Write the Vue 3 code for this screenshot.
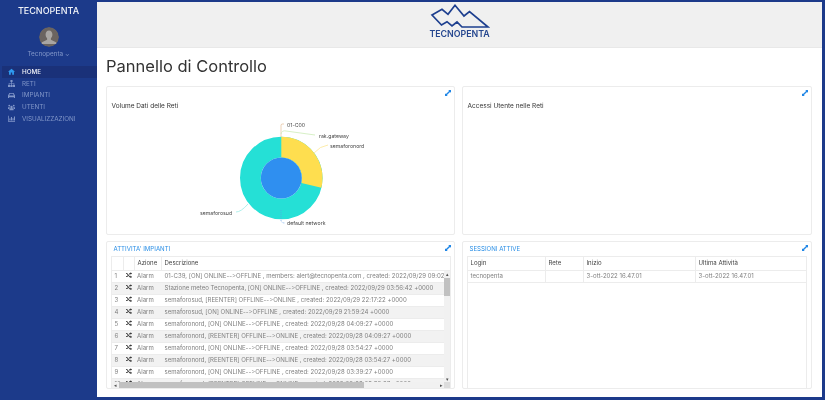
<template>
  <div class="page">
    <aside class="sidebar">
      <div class="brand">TECNOPENTA</div>
      <div class="avatar">
        <svg viewBox="0 0 20 20" width="20" height="20">
          <circle cx="10" cy="10" r="10" fill="#6b6460" />
          <path d="M10 3.500c2.200 0 3.400 1.700 3.400 4 0 1.700-.7 3-1.500 3.800v1.500l4.600 2.200c.8.4 1 1 1 2H2.500c0-1 .2-1.600 1-2l4.600-2.200v-1.500C7.300 10.500 6.600 9.200 6.600 7.500c0-2.300 1.200-4 3.400-4z" fill="#a9a6a3" />
        </svg>
      </div>
      <div class="user">Tecnopenta <span class="caret">⌄</span></div>
      <nav class="menu">
        <a v-for="item in menu" :key="item.label" class="menu-item" :class="{ active: item.active }">
          <svg viewBox="0 0 10 10" width="7" height="7"><path :d="item.icon" fill="currentColor" /></svg>
          <span>{{ item.label }}</span>
        </a>
      </nav>
    </aside>

    <main class="main">
      <header class="topbar">
        <svg class="logo" viewBox="0 0 60 26" width="60" height="26">
          <path d="M2 11 12 5.300 18 10.300 25 1.300 34 12 39.500 7.700 58 23H32L27 18 22 22 17 17.700 11.500 21z" fill="none" stroke="#1d3f8f" stroke-width="1.700" />
        </svg>
        <div class="logo-text">TECNOPENTA</div>
      </header>

      <div class="content">
        <h1>Pannello di Controllo</h1>
        <div class="cards">
          <section class="card">
            <svg class="expand" viewBox="0 0 8 8" width="6" height="6"><path :d="expandIcon" fill="#1f86e6" /></svg>
            <div class="chart-title">Volume Dati delle Reti</div>
            <svg class="chart" viewBox="0 0 339 118" width="339" height="118">
              <path d="M174 25V13Q174 11.500 177 12" fill="none" stroke="#e9c7a5" stroke-width=".8" />
              <path d="M174 22Q175 18 179 19L208 23" fill="none" stroke="#cdecb8" stroke-width=".8" />
              <path d="M207 41Q213 34 221 33" fill="none" stroke="#fde795" stroke-width=".8" />
              <path d="M129 100Q134 100 141 92" fill="none" stroke="#9cecE6" stroke-width=".8" />
              <circle cx="174.300" cy="66" r="30.900" fill="none" stroke="#25e0d6" stroke-width="20.800" />
              <path d="M174.300 24.700A41.300 41.300 0 0 1 214.400 75.700L194.400 71A20.500 20.500 0 0 0 174.300 45.500z" fill="#fede4f" />
              <circle cx="174.300" cy="66" r="20.500" fill="#2f8ff0" />
              <path d="M174 98V108Q174 111 178 111" fill="none" stroke="#5a9ee8" stroke-width=".7" stroke-dasharray="1 1" />
              <text x="180" y="15" class="chart-label">01-C00</text>
              <text x="212" y="26" class="chart-label">rak.gateway</text>
              <text x="223" y="36" class="chart-label">semaforonord</text>
              <text x="93" y="103" class="chart-label">semaforosud</text>
              <text x="180" y="113" class="chart-label">default network</text>
            </svg>
          </section>

          <section class="card">
            <svg class="expand" viewBox="0 0 8 8" width="6" height="6"><path :d="expandIcon" fill="#1f86e6" /></svg>
            <div class="chart-title">Accessi Utente nelle Reti</div>
          </section>

          <section class="card table-card">
            <svg class="expand" viewBox="0 0 8 8" width="6" height="6"><path :d="expandIcon" fill="#1f86e6" /></svg>
            <div class="card-title">ATTIVITA' IMPIANTI</div>
            <div class="grid activity">
              <div class="grid-head">
                <div class="c-num"></div>
                <div class="c-icon"></div>
                <div class="c-action">Azione</div>
                <div class="c-desc">Descrizione</div>
              </div>
              <div class="scroll-area">
                <div class="rows">
                  <div v-for="(row, i) in activity" :key="i" class="grid-row">
                    <div class="c-num">{{ i + 1 }}</div>
                    <div class="c-icon">
                      <svg viewBox="0 0 8 8" width="6" height="6"><path d="M0 1.500h1.700l3.500 4.500H6V4.800L8 6.500 6 8.200V7H4.700L1.200 2.500H0zM0 5.500h1.200l1-1.300.6.800-1.100 1.500H0zM4.700 1.500H6V.3L8 2 6 3.700V2.500h-.8l-.9 1.200-.6-.8z" fill="#1f1f1f" /></svg>
                    </div>
                    <div class="c-action">Alarm</div>
                    <div class="c-desc">{{ row }}</div>
                  </div>
                </div>
                <div class="vbar">
                  <span class="arrow">▴</span>
                  <div class="vtrack"><div class="vthumb"></div></div>
                  <span class="arrow">▾</span>
                </div>
              </div>
              <div class="hbar">
                <span class="arrow">◂</span>
                <div class="htrack"><div class="hthumb"></div></div>
                <span class="arrow">▸</span>
                <span class="corner"></span>
              </div>
            </div>
          </section>

          <section class="card table-card">
            <svg class="expand" viewBox="0 0 8 8" width="6" height="6"><path :d="expandIcon" fill="#1f86e6" /></svg>
            <div class="card-title">SESSIONI ATTIVE</div>
            <div class="grid sessions">
              <div class="grid-head">
                <div class="s-login">Login</div>
                <div class="s-net">Rete</div>
                <div class="s-time">Inizio</div>
                <div class="s-time">Ultima Attività</div>
              </div>
              <div class="grid-row">
                <div class="s-login">tecnopenta</div>
                <div class="s-net"></div>
                <div class="s-time">3-ott-2022 16.47.01</div>
                <div class="s-time">3-ott-2022 16.47.01</div>
              </div>
            </div>
          </section>
        </div>
      </div>
    </main>
  </div>
</template>

<script setup>
const expandIcon = 'M4.500 0H8V3.500L6.700 2.600 2.600 6.700 3.500 8H0V4.500L1.300 5.400 5.400 1.300z'

const menu = [
  { label: 'HOME', active: true, icon: 'M5 1 0 5.500h1.500V9.500h2.500V6.500h2V9.500h2.500V5.500H10z' },
  { label: 'RETI', icon: 'M3.500 0h3v3h-1v1.500H9V7h1v3H7V7h1V5.500H5.500V7h1v3h-3V7h1V5.500H2V7h1v3H0V7h1V4.500h3.500V3h-1z' },
  { label: 'IMPIANTI', icon: 'M2 1.500h6L10 5v3.500H8.500V7.500h-7V8.500H0V5zM2.800 2.500 1.700 5h6.600L7.200 2.500z' },
  { label: 'UTENTI', icon: 'M5 2.500a1.700 1.700 0 1 1 0 3.400 1.700 1.700 0 0 1 0-3.400zM1.800 1a1.300 1.300 0 1 1 0 2.600 1.300 1.300 0 0 1 0-2.600zM8.200 1a1.300 1.300 0 1 1 0 2.600 1.300 1.300 0 0 1 0-2.600zM2 6.500C2 6 2.500 6 3 6h4c.5 0 1 .5 1 1v2H2zM0 4.500h2.200L2.800 5.700C1.500 6 1.300 6.500 1.300 7H0zM10 4.500H7.800L7.200 5.700c1.300.3 1.500.8 1.500 1.300H10z' },
  { label: 'VISUALIZZAZIONI', icon: 'M0 1h1v7.500h9v1H0zM2 5h1.500v3H2zM4.200 3h1.500v5H4.200zM6.400 4.500h1.500V8H6.400zM8.500 2H10v6H8.500z' }
]

const activity = [
  '01-C39, [ON] ONLINE-->OFFLINE , members: alert@tecnopenta.com , created: 2022/09/29 09:02:17 +0000',
  'Stazione meteo Tecnopenta, [ON] ONLINE-->OFFLINE , created: 2022/09/29 03:56:42 +0000',
  'semaforosud, [REENTER] OFFLINE-->ONLINE , created: 2022/09/29 22:17:22 +0000',
  'semaforosud, [ON] ONLINE-->OFFLINE , created: 2022/09/29 21:59:24 +0000',
  'semaforonord, [ON] ONLINE-->OFFLINE , created: 2022/09/28 04:09:27 +0000',
  'semaforonord, [REENTER] OFFLINE-->ONLINE , created: 2022/09/28 04:09:27 +0000',
  'semaforonord, [ON] ONLINE-->OFFLINE , created: 2022/09/28 03:54:27 +0000',
  'semaforonord, [REENTER] OFFLINE-->ONLINE , created: 2022/09/28 03:54:27 +0000',
  'semaforonord, [ON] ONLINE-->OFFLINE , created: 2022/09/28 03:39:27 +0000',
  'semaforonord, [REENTER] OFFLINE-->ONLINE , created: 2022/09/28 03:39:27 +0000'
]
</script>

<style>
html,
body {
  margin: 0;
  background: #1c3a8a;
}
</style>

<style scoped>
.page {
  display: flex;
  width: 825px;
  height: 400px;
  overflow: hidden;
  box-sizing: border-box;
  padding: 2px 3px 3px 0;
  background: #1c3a8a;
  font-family: Inter, "Open Sans", sans-serif;
  font-variant-ligatures: none;
  color: #444;
  filter: blur(0.3px);
}

.sidebar {
  flex: none;
  width: 97px;
  display: flex;
  flex-direction: column;
  align-items: center;
  color: #8297c9;
}

.brand {
  margin-top: 3px;
  font-size: 9px;
  font-weight: 500;
  line-height: 11px;
  color: #f2f4f8;
}

.avatar {
  margin-top: 11px;
  height: 20px;
  overflow: hidden;
  border-radius: 50%;
}

.user {
  margin-top: 2px;
  font-size: 6.400px;
  line-height: 9px;
}

.caret {
  font-size: 6px;
}

.menu {
  align-self: stretch;
  margin: 7px 0 0 2px;
  display: flex;
  flex-direction: column;
}

.menu-item {
  display: flex;
  align-items: center;
  gap: 7px;
  height: 11.750px;
  padding-left: 6px;
  font-size: 6.300px;
}

.menu-item svg {
  flex: none;
}

.menu-item.active {
  background: #1a3179;
  color: #f2f4fa;
  font-weight: 500;
}

.menu-item.active svg {
  color: #2f9bf0;
}

.main {
  flex: 1;
  min-width: 0;
  display: flex;
  flex-direction: column;
  background: #fff;
}

.topbar {
  flex: none;
  height: 46px;
  background: #f0f0f0;
  border-bottom: 1px solid #e8e8e8;
  box-sizing: border-box;
  display: flex;
  flex-direction: column;
  align-items: center;
  padding-top: 2px;
}

.logo {
  display: block;
}

.logo-text {
  font-size: 8.800px;
  line-height: 9px;
  font-weight: 600;
  color: #26478f;
  margin-top: -1px;
}

.content {
  flex: 1;
  min-height: 0;
  padding: 0 10px 0 9px;
}

h1 {
  margin: 7px 0 0;
  font-size: 16.500px;
  line-height: 22px;
  font-weight: 400;
  color: #333;
}

.cards {
  margin-top: 9px;
  display: grid;
  grid-template-columns: 349px 350px;
  grid-template-rows: 149px 148px;
  column-gap: 7px;
  row-gap: 6px;
}

.card {
  position: relative;
  box-sizing: border-box;
  min-width: 0;
  border: 1px solid #ececec;
  border-radius: 2px;
  background: #fff;
  overflow: hidden;
}

.expand {
  position: absolute;
  top: 3px;
  right: 3px;
}

.chart-title {
  margin: 15px 0 0 4.500px;
  font-size: 6.500px;
  line-height: 8px;
  color: #333;
}

.chart {
  display: block;
  margin-top: 2px;
}

.chart-label {
  font-size: 5.200px;
  fill: #444;
}

.card-title {
  margin: 2px 0 0 6.500px;
  height: 11px;
  font-size: 6.100px;
  line-height: 9px;
  color: #2b8fe6;
}

.grid {
  margin: 1px 4px 0;
  border: 1px solid #ececec;
  border-bottom: 0;
  box-sizing: border-box;
  height: 132px;
  font-size: 6.050px;
  display: flex;
  flex-direction: column;
}

.activity {
  margin-right: 3px;
}

.grid-head {
  flex: none;
  display: flex;
  height: 14px;
  line-height: 12px;
  color: #444;
  border-bottom: 1px solid #ececec;
  box-sizing: border-box;
}

.grid-head > div,
.grid-row > div {
  box-sizing: border-box;
  padding-left: 2.500px;
  white-space: nowrap;
}

.grid-head > div + div,
.sessions .grid-row > div + div {
  border-left: 1px solid #ececec;
}

.scroll-area {
  flex: 1;
  min-height: 0;
  display: flex;
}

.rows {
  flex: 1;
  min-width: 0;
  overflow: hidden;
}

.grid-row {
  display: flex;
  height: 12px;
  line-height: 10px;
  color: #808080;
  border-bottom: 1px solid #ececec;
  box-sizing: border-box;
}

.rows .grid-row:nth-child(even) {
  background: #f2f2f2;
}

.c-num {
  flex: none;
  width: 11px;
}

.c-icon {
  flex: none;
  width: 11px;
}

.grid-row .c-icon {
  padding-left: 3px;
}

.c-action {
  flex: none;
  width: 27px;
}

.grid-row .c-action {
  padding-left: 3px;
}

.c-desc {
  flex: 1;
  min-width: 0;
  overflow: hidden;
}

.grid-row .c-desc {
  padding-left: 3.500px;
}

.vbar {
  flex: none;
  width: 6px;
  display: flex;
  flex-direction: column;
  background: #f1f1f1;
}

.vtrack,
.htrack {
  flex: 1;
}

.vthumb {
  margin-top: 1px;
  height: 18px;
  background: #c1c1c1;
}

.arrow {
  flex: none;
  height: 6px;
  width: 6px;
  font-size: 5px;
  line-height: 6px;
  text-align: center;
  color: #505050;
}

.hbar {
  flex: none;
  height: 6px;
  display: flex;
  background: #f1f1f1;
}

.hthumb {
  margin-left: 1px;
  width: 245px;
  height: 6px;
  background: #c1c1c1;
}

.corner {
  flex: none;
  width: 6px;
  background: #dcdcdc;
}

.s-login {
  flex: none;
  width: 77px;
}

.s-net {
  flex: none;
  width: 38px;
}

.s-time {
  flex: none;
  width: 112px;
}
</style>
